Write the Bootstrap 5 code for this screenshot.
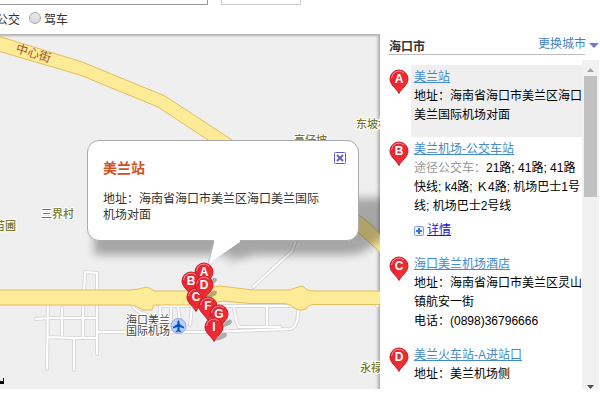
<!DOCTYPE html>
<html lang="zh-CN">
<head>
<meta charset="utf-8">
<meta name="viewport" content="width=device-width, initial-scale=1">
<title>美兰站 - 海口市地图</title>
<link href="https://cdn.jsdelivr.net/npm/bootstrap@5.3.0/dist/css/bootstrap.min.css" rel="stylesheet">
<style>
body{font:12px/19px "Liberation Sans","Noto Sans CJK SC",sans-serif;color:#000;background:#fff}
button,input{font:inherit}
.search-bar{margin-top:-22px;gap:13px}
.query-box{width:36%;min-width:216px;height:27px;margin-left:-8px;border:2px solid #999;border-width:2px 1px 1px 2px}
.search-button{width:80px;height:27px;border:1px solid #ccc;background:#fff}
.mode-bar{height:29px;margin-left:-19px;padding-top:2px;gap:9px;color:#333}
.mode-bar label{display:flex;align-items:center;gap:3px}
.mode-bar input{appearance:none;width:12px;height:12px;margin:0 0 5px;border:1px solid #aaa;border-radius:50%;background:linear-gradient(#e9e9e9,#d8d8d8)}
.stage{padding-bottom:11px;min-height:0}
.map-area{background:#efefef;box-shadow:inset 0 4px 2px -2px #b4b4b4,inset -5px 0 3px -3px #aaa;min-width:0}
.map-art{display:block}
.map-art text{font-family:"Liberation Sans","Noto Sans CJK SC",sans-serif}
.place-name{font-size:11px;font-weight:500;fill:#77772b;stroke:#fff;stroke-width:2px;paint-order:stroke}
.popup{left:87px;top:106px;width:272px;height:101px;border:1px solid #aaa;border-radius:12px;background:#fff;padding:17px 36px 0 15px;color:#333;line-height:16px}
.popup h2{font-size:14px;line-height:20px;font-weight:700;color:#d2501e;margin:0 0 13px}
.popup-tail{left:119px;top:98px}
.close-button{right:12px;top:11px;width:12px;height:12px;border:0;padding:0;background:none;line-height:0}
.close-button svg{display:block}
.side{width:220px}
.side-head{height:21px;margin:0 15px 0 9px;border-bottom:1px solid #bbb}
.side-head h1{font-size:12px;line-height:19px;font-weight:700;color:#333;margin:4px 0 0}
.side-head a{line-height:19px;color:#4283bf;margin:0 -14px 0 0;white-space:nowrap;gap:3px}
.results{margin-top:5px;min-height:0}
.result-list{padding:5px 0 0 8px}
.pin-cell{width:23px;padding:4px 0 0 1px}
.entry{padding:3px 0 12px 3px;min-width:0}
.entry.active{background:#efefef}
.entry a{color:#428bca;text-decoration:underline}
.entry .detail-link{color:#1a12d8}
.detail-row{margin-top:5px;gap:3px}
.route-label{color:#999}
.scroll-track{width:17px;margin-right:1px;background:#f1f1f1;padding:8px 0 0}
.scroll-thumb{width:13px;height:121px;background:#c1c1c1;margin-top:4px}
</style>
<script src="https://cdn.jsdelivr.net/npm/bootstrap@5.3.0/dist/js/bootstrap.bundle.min.js"></script>
</head>
<body class="vh-100 overflow-hidden d-flex flex-column">
<svg width="0" height="0" class="position-absolute" aria-hidden="true">
  <defs>
    <linearGradient id="red" x1="0" y1="0" x2="1" y2="1"><stop offset="0" stop-color="#e3202d"/><stop offset="1" stop-color="#f23335"/></linearGradient>
    <g id="pin">
      <path d="M0 14.500C-2 10-9 6-9 0A9 9 0 0 1 9 0C9 6 2 10 0 14.500Z" fill="url(#red)" stroke="#c51d2c" stroke-width="1"/>
      <path d="M-7.500-1A7.500 7.500 0 0 1 5-6" fill="none" stroke="#f78a8d" stroke-width="1"/>
    </g>
    <g id="pin-shadow"><path d="M0 14L7 7Q13 4 13 8Q12 12 0 14Z" fill="#000" opacity=".28"/></g>
  </defs>
</svg>
<header class="flex-shrink-0">
  <form class="overflow-hidden">
    <div class="search-bar d-flex">
      <input class="query-box" type="text" aria-label="搜索地点">
      <button class="search-button" type="button" aria-label="搜索"></button>
    </div>
    <div class="mode-bar d-flex align-items-center">
      <label><input type="radio" name="mode">公交</label>
      <label><input type="radio" name="mode">驾车</label>
    </div>
  </form>
</header>
<main class="stage d-flex flex-grow-1">
  <section class="map-area position-relative flex-grow-1 overflow-hidden" aria-label="地图">
    <svg class="map-art w-100 h-100">
      <defs>
        <filter id="soft" x="-10%" y="-40%" width="120%" height="180%"><feGaussianBlur stdDeviation="4"/></filter>
        <g id="lanes" fill="none" stroke-linejoin="round" stroke-linecap="round">
          <path d="M84 292L85 272L97 273L97 292M48 300L47 369M62 308V335M36 319L48 318H97M83 300V336M97 300V338L97 354M48 337L74 338L97 338M74 338V370M97 332H205L290 329Q298 327 298 312M132 305Q137 313 146 314M160 306V320M171 306V322M178 306L180 322M192 306L190 325M160 306H292Q300 306 298 314M234 308L236 320L239 327H280M267 307V326M253 287L292 251L296 240M377 306V305"/>
        </g>
      </defs>
      <g transform="translate(0 -34)">
        <use href="#lanes" stroke="#d9d9d9" stroke-width="4"/>
        <use href="#lanes" stroke="#fff" stroke-width="2"/>
        <g fill="#feeb98" stroke="#e4bd57">
          <path d="M-2 36L82 62L165 96L232 140L320 190L359 215L373 226L382 237L900 600V618L382 254L359 233L300 200L208 140L158 107L80 75L-2 51Z"/>
          <path d="M-2 290H128Q139 290 146 287Q151 288 154 291H200L214 287Q220 285 228 287L253 290H290Q293 288 303 286Q306 291 315 291H1400V304.500H315Q308 304 306 309Q299 312 293 307Q289 303 280 303.500H250L222 301L206 305H155Q153 305 152 310H143Q136 305 130 305H-2Z"/>
        </g>
        <g fill="#000" filter="url(#soft)" opacity=".3">
          <path d="M94 220L120 198H384V238L370 248Q360 255 347 255H94Z"/>
          <path d="M224 262L270 252H238Z"/>
        </g>
        <text x="15" y="52" font-size="12" fill="#a0521f" transform="rotate(17 15 52)">中心街</text>
        <g class="place-name">
          <text x="294" y="144">高仔坡</text><text x="356" y="128">东坡村</text><text x="41" y="218">三界村</text><text x="-6" y="230">苗圃</text><text x="360" y="372">永禄村</text>
        </g>
        <g font-size="11" fill="#444" stroke="#fff" stroke-width="2" paint-order="stroke"><text x="126" y="324">海口美兰</text><text x="126" y="335">国际机场</text></g>
        <circle cx="178.500" cy="326" r="7.500" fill="#b5d0ff" stroke="#8ca9df"/>
        <path d="M178.500 320.500C179.500 320.500 179.600 322 179.600 324L184 327V328.500L179.600 327V330L181.300 331.500V332.300L178.500 331.500L175.700 332.300V331.500L177.400 330V327L173 328.500V327L177.400 324C177.400 322 177.500 320.500 178.500 320.500Z" fill="#0b50c4"/>
        <use href="#pin-shadow" x="204" y="272"/><use href="#pin-shadow" x="204" y="285"/><use href="#pin-shadow" x="219" y="314"/><use href="#pin-shadow" x="214" y="327"/>
        <g font-size="12" font-weight="700" fill="#fff" text-anchor="middle">
          <use href="#pin" x="204" y="272"/><text x="204" y="276">A</text>
          <use href="#pin" x="191" y="281"/><text x="191" y="285">B</text>
          <use href="#pin" x="196" y="297"/><text x="196" y="301">C</text>
          <use href="#pin" x="204" y="285"/><text x="204" y="289">D</text>
          <use href="#pin" x="208" y="306"/><text x="208" y="310">F</text>
          <use href="#pin" x="219" y="314"/><text x="219" y="318">G</text>
          <use href="#pin" x="214" y="327"/><text x="214" y="331">I</text>
        </g>
        <path d="M0 381H3V378H4V384H0Z" fill="#000"/>
      </g>
    </svg>
    <article class="popup position-absolute">
      <h2>美兰站</h2>
      <p class="mb-0">地址：海南省海口市美兰区海口美兰国际机场对面</p>
      <button class="close-button position-absolute" type="button" aria-label="关闭">
        <svg width="12" height="12"><rect x=".5" y=".5" width="11" height="11" rx="1" fill="#fff" stroke="#615bd3"/><path d="M3 3L9 9M9 3L3 9" stroke="#615bd3" stroke-width="2"/></svg>
      </button>
      <svg class="popup-tail position-absolute" width="40" height="28" aria-hidden="true"><path d="M7 0V3L1 25L33 3V0Z" fill="#fff"/><path d="M7 3L1 25" stroke="#bbb" fill="none"/></svg>
    </article>
  </section>
  <aside class="side d-flex flex-column flex-shrink-0">
    <div class="side-head d-flex justify-content-between flex-shrink-0">
      <h1>海口市</h1>
      <a class="d-flex align-items-center text-decoration-none" href="#">更换城市<svg width="10" height="6" class="mt-1" aria-hidden="true"><path d="M0 0H10L5 5Z" fill="#7474d4"/></svg></a>
    </div>
    <div class="results d-flex flex-grow-1 overflow-hidden">
      <ul class="result-list list-unstyled mb-0 flex-grow-1">
        <li class="d-flex">
          <div class="pin-cell flex-shrink-0"><svg width="20" height="27" aria-hidden="true"><use href="#pin" x="10" y="10"/><text x="10" y="14" font-size="12" font-weight="700" fill="#fff" text-anchor="middle">A</text></svg></div>
          <div class="entry active flex-grow-1"><a href="#">美兰站</a><div>地址：海南省海口市美兰区海口美兰国际机场对面</div></div>
        </li>
        <li class="d-flex">
          <div class="pin-cell flex-shrink-0"><svg width="20" height="27" aria-hidden="true"><use href="#pin" x="10" y="10"/><text x="10" y="14" font-size="12" font-weight="700" fill="#fff" text-anchor="middle">B</text></svg></div>
          <div class="entry flex-grow-1"><a href="#">美兰机场-公交车站</a><div><span class="route-label">途径公交车：</span>21路; 41路; 41路快线; k4路; Ｋ4路; 机场巴士1号线; 机场巴士2号线</div>
            <div class="detail-row d-flex align-items-center"><svg width="10" height="10" aria-hidden="true"><rect x=".5" y=".5" width="9" height="9" rx="1" fill="#e8f0fb" stroke="#7d9fd8"/><path d="M5 2V8M2 5H8" stroke="#3e6fc4" stroke-width="2"/></svg><a class="detail-link" href="#">详情</a></div></div>
        </li>
        <li class="d-flex">
          <div class="pin-cell flex-shrink-0"><svg width="20" height="27" aria-hidden="true"><use href="#pin" x="10" y="10"/><text x="10" y="14" font-size="12" font-weight="700" fill="#fff" text-anchor="middle">C</text></svg></div>
          <div class="entry flex-grow-1"><a href="#">海口美兰机场酒店</a><div>地址：海南省海口市美兰区灵山镇航安一街</div><div>电话：(0898)36796666</div></div>
        </li>
        <li class="d-flex">
          <div class="pin-cell flex-shrink-0"><svg width="20" height="27" aria-hidden="true"><use href="#pin" x="10" y="10"/><text x="10" y="14" font-size="12" font-weight="700" fill="#fff" text-anchor="middle">D</text></svg></div>
          <div class="entry flex-grow-1"><a href="#">美兰火车站-A进站口</a><div>地址：美兰机场侧</div></div>
        </li>
      </ul>
      <div class="scroll-track d-flex flex-column align-items-center flex-shrink-0" aria-hidden="true">
        <svg class="flex-shrink-0" width="7" height="4"><path d="M0 4L3.500 0L7 4Z" fill="#a3a3a3"/></svg>
        <div class="scroll-thumb flex-shrink-0"></div>
        <svg class="mt-auto flex-shrink-0" width="7" height="4"><path d="M0 0H7L3.500 4Z" fill="#505050"/></svg>
      </div>
    </div>
  </aside>
</main>
</body>
</html>
